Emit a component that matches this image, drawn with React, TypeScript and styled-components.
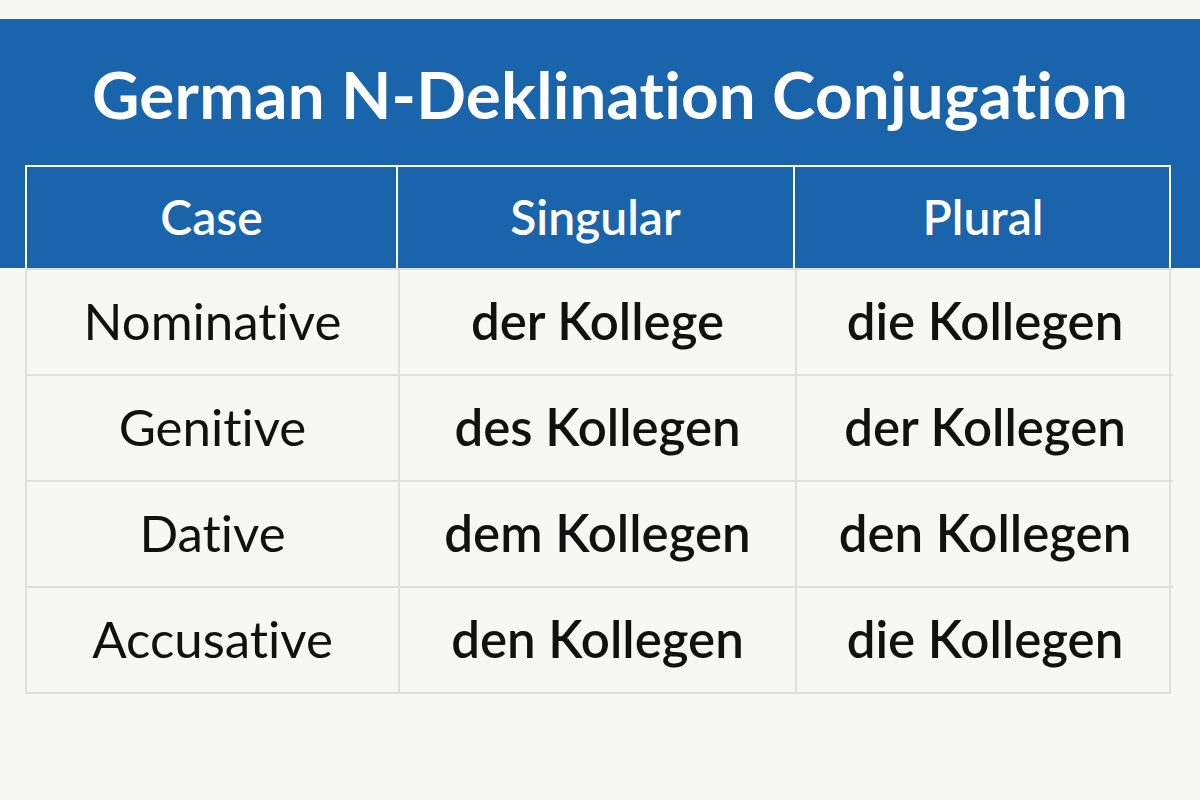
import React from "react";
import styled, { createGlobalStyle } from "styled-components";

const Global = createGlobalStyle`
  html, body { margin: 0; padding: 0; background: #f7f7f5; }
  body {
    font-family: Lato, "Noto Sans", sans-serif;
    font-variant-ligatures: none;
    font-feature-settings: "liga" 0, "clig" 0;
  }
`;

const Page = styled.div`
  width: 1200px;
  height: 800px;
  background: #f7f7f5;
  padding-top: 19px;
  box-sizing: border-box;
`;

const Banner = styled.header`
  background: #1a64ab;
  padding: 0 29px 0 25px;
  display: flex;
  flex-direction: column;
`;

const Title = styled.h1`
  margin: 0;
  height: 146px;
  display: flex;
  align-items: center;
  justify-content: center;
  padding-left: 24px;
  padding-top: 2px;
  box-sizing: border-box;
  color: #ffffff;
  font-size: 65.5px;
  font-weight: 700;
  letter-spacing: 0.2px;
`;

const Row = styled.div<{ $head?: boolean }>`
  display: grid;
  grid-template-columns: 371px 397px 378px;
  width: 1146px;
  height: ${(p) => (p.$head ? "103px" : "106px")};
  box-sizing: border-box;
`;

const HeadRow = styled(Row)`
  border-right: 2px solid #ffffff;
`;

const Body = styled.div`
  margin-left: 25px;
  width: 1146px;
  border-left: 2px solid #dfdfdd;
  border-right: 2px solid #dfdfdd;
  border-bottom: 2px solid #dfdfdd;
  box-sizing: border-box;
`;

const Cell = styled.div<{ $head?: boolean; $bold?: boolean }>`
  display: flex;
  align-items: center;
  justify-content: center;
  box-sizing: border-box;
  font-size: ${(p) => (p.$head ? "48px" : "51px")};
  font-weight: ${(p) => (p.$head ? 600 : p.$bold ? 600 : 400)};
  color: ${(p) => (p.$head ? "#ffffff" : "#111111")};
  border-left: 2px solid ${(p) => (p.$head ? "#ffffff" : "#dfdfdd")};
  border-top: 2px solid ${(p) => (p.$head ? "#ffffff" : "#dfdfdd")};
  padding-bottom: ${(p) => (p.$head ? "2px" : "4px")};
  &:first-child { border-left: ${(p) => (p.$head ? "2px solid #ffffff" : "none")}; }
`;

const rows = [
  ["Nominative", "der Kollege", "die Kollegen"],
  ["Genitive", "des Kollegen", "der Kollegen"],
  ["Dative", "dem Kollegen", "den Kollegen"],
  ["Accusative", "den Kollegen", "die Kollegen"],
];

export default function App() {
  return (
    <Page>
      <Global />
      <Banner>
        <Title>German N-Deklination Conjugation</Title>
        <HeadRow $head>
          <Cell $head>Case</Cell>
          <Cell $head>Singular</Cell>
          <Cell $head>Plural</Cell>
        </HeadRow>
      </Banner>
      <Body>
        {rows.map((r, i) => (
          <Row key={i}>
            <Cell>{r[0]}</Cell>
            <Cell $bold>{r[1]}</Cell>
            <Cell $bold>{r[2]}</Cell>
          </Row>
        ))}
      </Body>
    </Page>
  );
}
